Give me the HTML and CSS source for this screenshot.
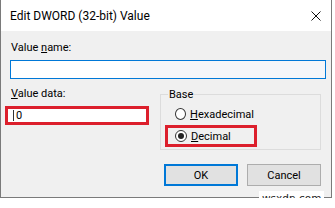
FILE: index.html
```html
<!DOCTYPE html>
<html lang="en">
<head>
  <meta charset="UTF-8">
  <title>Edit DWORD (32-bit) Value</title>
  <link rel="stylesheet" href="styles.css">
</head>
<body>

  <div class="dialog">
    <!-- Title bar -->
    <div class="titlebar">
      <span class="title">Edit DWORD (32-bit) Value</span>
      <svg class="close" width="10" height="10" viewBox="0 0 10 10">
        <path d="M0.5 0.5 L9.5 9.5 M9.5 0.5 L0.5 9.5" stroke="#111" stroke-width="1" fill="none"/>
      </svg>
    </div>

    <div class="content">
      <div class="label">Value <u>n</u>ame:</div>
      <div class="field name-field"></div>

      <div class="row">
        <div class="data-col">
          <div class="label"><u>V</u>alue data:</div>
          <div class="field data-field marked"><span class="caret"></span>0</div>
        </div>

        <fieldset class="base">
          <legend>Base</legend>
          <div class="radio"><span class="dot"></span><span><u>H</u>exadecimal</span></div>
          <div class="radio marked"><span class="dot checked"></span><span><u>D</u>ecimal</span></div>
        </fieldset>
      </div>

      <div class="buttons">
        <div class="btn default">OK</div>
        <div class="btn">Cancel</div>
      </div>
    </div>
  </div>

  <div class="watermark">wsxdn.com</div>

</body>
</html>
```

FILE: styles.css
```css
* {
  box-sizing: border-box;
}
body {
  margin: 0;
  background: #fff;
  font-family: Roboto, 'Noto Sans', sans-serif;
  font-size: 11px;
  color: #000;
  position: relative;
}

.dialog {
  width: 332px;
  border: 1px solid #7a7a7a;
  border-top: none;
}

/* Title bar */
.titlebar {
  height: 31px;
  background: #fff;
  display: flex;
  align-items: center;
  justify-content: space-between;
  padding: 0 10px 0 9px;
}
.title {
  font-size: 12px;
}
.close {
  display: block;
}

/* Body */
.content {
  height: 166px;
  background: #f0f0f0;
  padding: 10px 10px 0 0;
}
.label {
  line-height: 13px;
  padding-left: 10px;
}
.field {
  height: 19px;
  background: #fff;
}
.name-field {
  margin: 6px 0 0 9px;
  width: 316px;
  border: 1px solid #0078d7;
  background: linear-gradient(to right, #fff 119px, #f4f6f9 119px);
}

.row {
  display: flex;
  align-items: flex-start;
  margin-top: 8px;
}
.data-col {
  width: 148px;
}
.data-field {
  margin: 6px 0 0 4px;
  width: 144px;
  display: flex;
  align-items: center;
  padding-left: 5px;
  line-height: 13px;
}
.caret {
  width: 1px;
  height: 11px;
  background: #333;
  margin-right: 2px;
}
.marked {
  border: 3px solid #dc1f2c;
}

/* Base group */
.base {
  margin: 1px 0 0 11px;
  width: 161px;
  height: 62px;
  padding: 2px 0 0 4px;
  border: 1px solid #dcdcdc;
}
.base legend {
  padding: 0 1px;
  margin-left: 3px;
  line-height: 13px;
}
.radio {
  width: 92px;
  height: 22px;
  border: 3px solid transparent;
  display: flex;
  align-items: center;
  padding-left: 7px;
}
.radio.marked {
  border-color: #dc1f2c;
}
.dot {
  width: 12px;
  height: 12px;
  border: 1px solid #333;
  border-radius: 50%;
  background: #fff;
  margin-right: 4px;
  display: flex;
  align-items: center;
  justify-content: center;
}
.dot.checked::after {
  content: "";
  width: 6px;
  height: 6px;
  border-radius: 50%;
  background: #222;
}

/* Buttons */
.buttons {
  display: flex;
  justify-content: flex-end;
  gap: 9px;
  margin-top: 14px;
}
.btn {
  width: 74px;
  height: 22px;
  background: #e1e1e1;
  border: 1px solid #adadad;
  display: flex;
  align-items: center;
  justify-content: center;
}
.btn.default {
  border: 2px solid #0078d7;
}

.watermark {
  position: absolute;
  left: 259px;
  top: 191px;
  padding: 0 3px;
  background: #fff;
  font-family: 'DejaVu Sans', sans-serif;
  font-size: 10.5px;
  line-height: 14px;
  color: #222;
}
```
